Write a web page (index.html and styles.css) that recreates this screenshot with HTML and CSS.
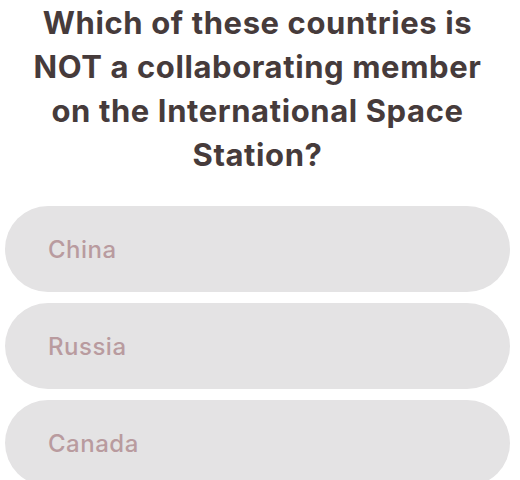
FILE: index.html
```html
<!DOCTYPE html>
<html>
<head>
<meta charset="utf-8">
<link rel="stylesheet" href="styles.css">
</head>
<body>
<main class="quiz">
  <h1 class="question">Which of these countries is NOT a collaborating member on the International Space Station?</h1>
  <div class="options">
    <div class="option">China</div>
    <div class="option">Russia</div>
    <div class="option">Canada</div>
  </div>
</main>
</body>
</html>
```
FILE: styles.css
```css
html, body {
  margin: 0;
  padding: 0;
  background: #ffffff;
}
body {
  width: 520px;
  height: 480px;
  overflow: hidden;
  font-family: "Inter", "Open Sans", sans-serif;
  font-variant-ligatures: none;
}
.quiz {
  padding: 0 10px 0 5px;
}
.question {
  margin: 0;
  padding: 1px 10px 0;
  text-align: center;
  font-size: 31px;
  letter-spacing: 0.6px;
  line-height: 44px;
  font-weight: 700;
  color: #463b3b;
}
.options {
  margin-top: 29px;
  display: flex;
  flex-direction: column;
  gap: 11px;
}
.option {
  height: 86px;
  border-radius: 43px;
  background: #e4e3e4;
  display: flex;
  align-items: center;
  padding-left: 43px;
  font-size: 24px;
  letter-spacing: 0.5px;
  color: #b99b9f;
  font-weight: 500;
}
```
